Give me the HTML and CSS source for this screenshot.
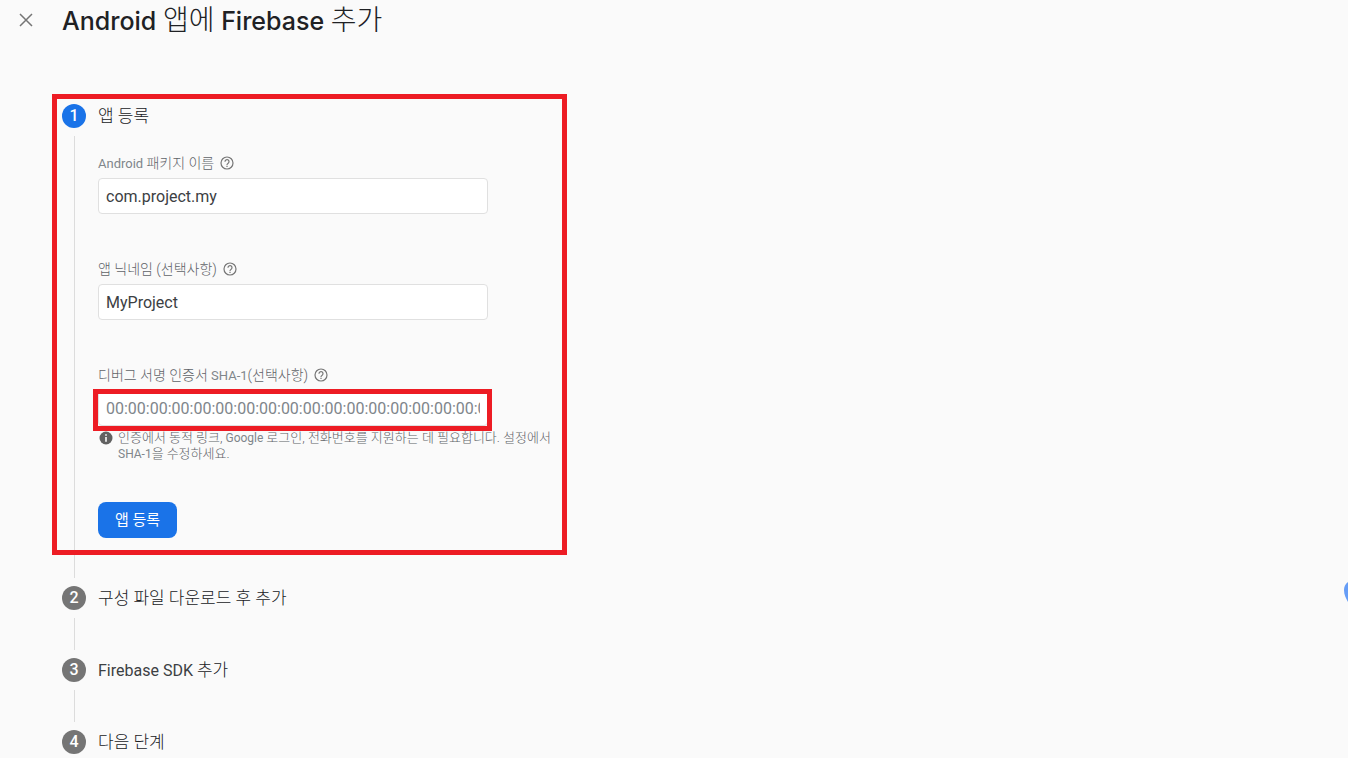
FILE: index.html
```html
<!DOCTYPE html>
<html lang="ko">
<head>
  <meta charset="UTF-8">
  <meta name="viewport" content="width=device-width, initial-scale=1.0">
  <title>Android 앱에 Firebase 추가</title>
  <link rel="stylesheet" href="styles.css">
</head>
<body>
  <header class="topbar">
    <button class="close-btn" type="button" aria-label="닫기">
      <svg width="14" height="14" viewBox="0 0 14 14"><path d="M1 1l12 12M13 1L1 13" stroke="#757575" stroke-width="1.5" fill="none"/></svg>
    </button>
    <h1>Android <span class="ko">앱에</span> Firebase <span class="ko">추가</span></h1>
  </header>

  <main class="steps">
    <section class="step marked">
      <div class="rail"><span class="badge active">1</span><span class="line"></span></div>
      <div class="content">
        <h2><span class="ko">앱 등록</span></h2>
        <form class="form">
          <div class="field">
            <div class="label-row">
              <label for="package">Android <span class="ko">패키지 이름</span></label>
              <svg class="help" viewBox="0 0 14 14"><circle cx="7" cy="7" r="6"/><path d="M5 5.7a2 2 0 1 1 3.2 1.5C7.4 7.8 7 8 7 8.9"/><path d="M7 9.8v1.3"/></svg>
            </div>
            <input id="package" type="text" value="com.project.my">
          </div>
          <div class="field">
            <div class="label-row">
              <label for="nickname"><span class="ko">앱 닉네임 (선택사항)</span></label>
              <svg class="help" viewBox="0 0 14 14"><circle cx="7" cy="7" r="6"/><path d="M5 5.7a2 2 0 1 1 3.2 1.5C7.4 7.8 7 8 7 8.9"/><path d="M7 9.8v1.3"/></svg>
            </div>
            <input id="nickname" type="text" value="MyProject">
          </div>
          <div class="field">
            <div class="label-row">
              <label for="sha"><span class="ko">디버그 서명 인증서</span> SHA-1<span class="ko">(선택사항)</span></label>
              <svg class="help" viewBox="0 0 14 14"><circle cx="7" cy="7" r="6"/><path d="M5 5.7a2 2 0 1 1 3.2 1.5C7.4 7.8 7 8 7 8.9"/><path d="M7 9.8v1.3"/></svg>
            </div>
            <div class="input-mark">
              <input id="sha" type="text" placeholder="00:00:00:00:00:00:00:00:00:00:00:00:00:00:00:00:00:00:00:00">
            </div>
            <div class="hint">
              <svg width="14" height="14" viewBox="0 0 14 14"><circle cx="7" cy="7" r="6.5" fill="#616161"/><path d="M7 3.2v1.6M7 6v4.8" stroke="#fafafa" stroke-width="1.6"/></svg>
              <p><span class="ko">인증에서 동적 링크,</span> Google <span class="ko">로그인, 전화번호를 지원하는 데 필요합니다. 설정에서</span> <span class="nowrap">SHA-1<span class="ko">을</span></span> <span class="ko">수정하세요.</span></p>
            </div>
          </div>
          <button class="submit-btn" type="button">앱 등록</button>
        </form>
      </div>
    </section>

    <section class="step">
      <div class="rail"><span class="badge">2</span><span class="line"></span></div>
      <div class="content"><h2><span class="ko">구성 파일 다운로드 후 추가</span></h2></div>
    </section>
    <section class="step">
      <div class="rail"><span class="badge">3</span><span class="line"></span></div>
      <div class="content"><h2>Firebase SDK <span class="ko">추가</span></h2></div>
    </section>
    <section class="step last">
      <div class="rail"><span class="badge">4</span></div>
      <div class="content"><h2><span class="ko">다음 단계</span></h2></div>
    </section>
  </main>

  <svg class="edge-shape" width="4" height="24" viewBox="0 0 4 24"><path d="M4 2C1 4 0 7 0 10c0 5 2 8 4 12z" fill="#669df6"/></svg>
</body>
</html>
```

FILE: styles.css
```css
* { margin: 0; padding: 0; box-sizing: border-box; }
body { font-family: Roboto, "Noto Sans CJK KR", sans-serif; background: #fafafa; color: #3c4043; }
button, input { font-family: inherit; }
.nowrap { white-space: nowrap; }

/* hangul is set a size up and lighter than the latin text */
.ko { font-weight: 300; }
h1 .ko { font-size: 28px; }
h2 .ko { font-size: 17px; color: #202124; }
label .ko { font-size: 14px; color: #5f6368; }
.hint .ko { font-size: 13px; color: #5f6368; }

.topbar { display: flex; align-items: center; gap: 22px; height: 40px; padding-left: 12px; }
.close-btn { display: flex; align-items: center; justify-content: center; width: 28px; height: 28px; border: 0; background: none; cursor: pointer; }
h1 { font-family: Inter, "Noto Sans CJK KR", sans-serif; font-size: 25px; font-weight: 500; line-height: 36px; color: #202124; }

.steps { max-width: 557px; padding: 64px 0 0 62px; }
.step { display: flex; gap: 12px; min-height: 72px; position: relative; }
.step.last { min-height: 24px; }
.rail { display: flex; flex-direction: column; align-items: center; width: 24px; }
.badge { width: 24px; height: 24px; border-radius: 50%; background: #757575; color: #fff; font-size: 16px; font-weight: 500; line-height: 24px; text-align: center; }
.badge.active { background: #1a73e8; }
.line { flex: 1; width: 1px; margin: 8px 0; background: #dcdcdc; }
.content { flex: 1; }
h2 { height: 24px; font-size: 16px; font-weight: 400; line-height: 24px; }

.form { padding: 24px 0 48px; }
.field { margin-bottom: 44px; }
.field:nth-child(3) { margin-bottom: 40px; }
.label-row { display: flex; align-items: center; gap: 6px; height: 22px; margin-bottom: 4px; color: #80868b; font-size: 13px; line-height: 20px; }
.help { width: 14px; height: 14px; fill: none; stroke: #757575; stroke-width: 1.2; }
input { display: block; width: 390px; max-width: 100%; height: 36px; padding: 0 7px; border: 1px solid #e0e0e0; border-radius: 4px; background: #fff; color: #3c4043; font-size: 16px; }
input::placeholder { color: #80868b; opacity: 1; }
.hint { display: flex; gap: 5px; height: 32px; margin-top: 4px; padding-left: 1px; color: #80868b; font-size: 12px; line-height: 16px; }
.hint svg { flex: none; margin-top: 1px; }
.submit-btn { height: 36px; padding: 0 17px; border: 0; border-radius: 8px; background: #1a73e8; color: #fff; font-size: 15px; font-weight: 400; line-height: 20px; cursor: pointer; }

/* red highlight frames */
.marked::after { content: ""; position: absolute; inset: -10px -10px 31px; border: 5px solid #ed1c24; pointer-events: none; }
.input-mark { position: relative; max-width: 390px; }
.input-mark::after { content: ""; position: absolute; inset: -1px -4px -5px -5px; border: 5px solid #ed1c24; pointer-events: none; }

.edge-shape { position: fixed; right: 0; top: 580px; }
```
